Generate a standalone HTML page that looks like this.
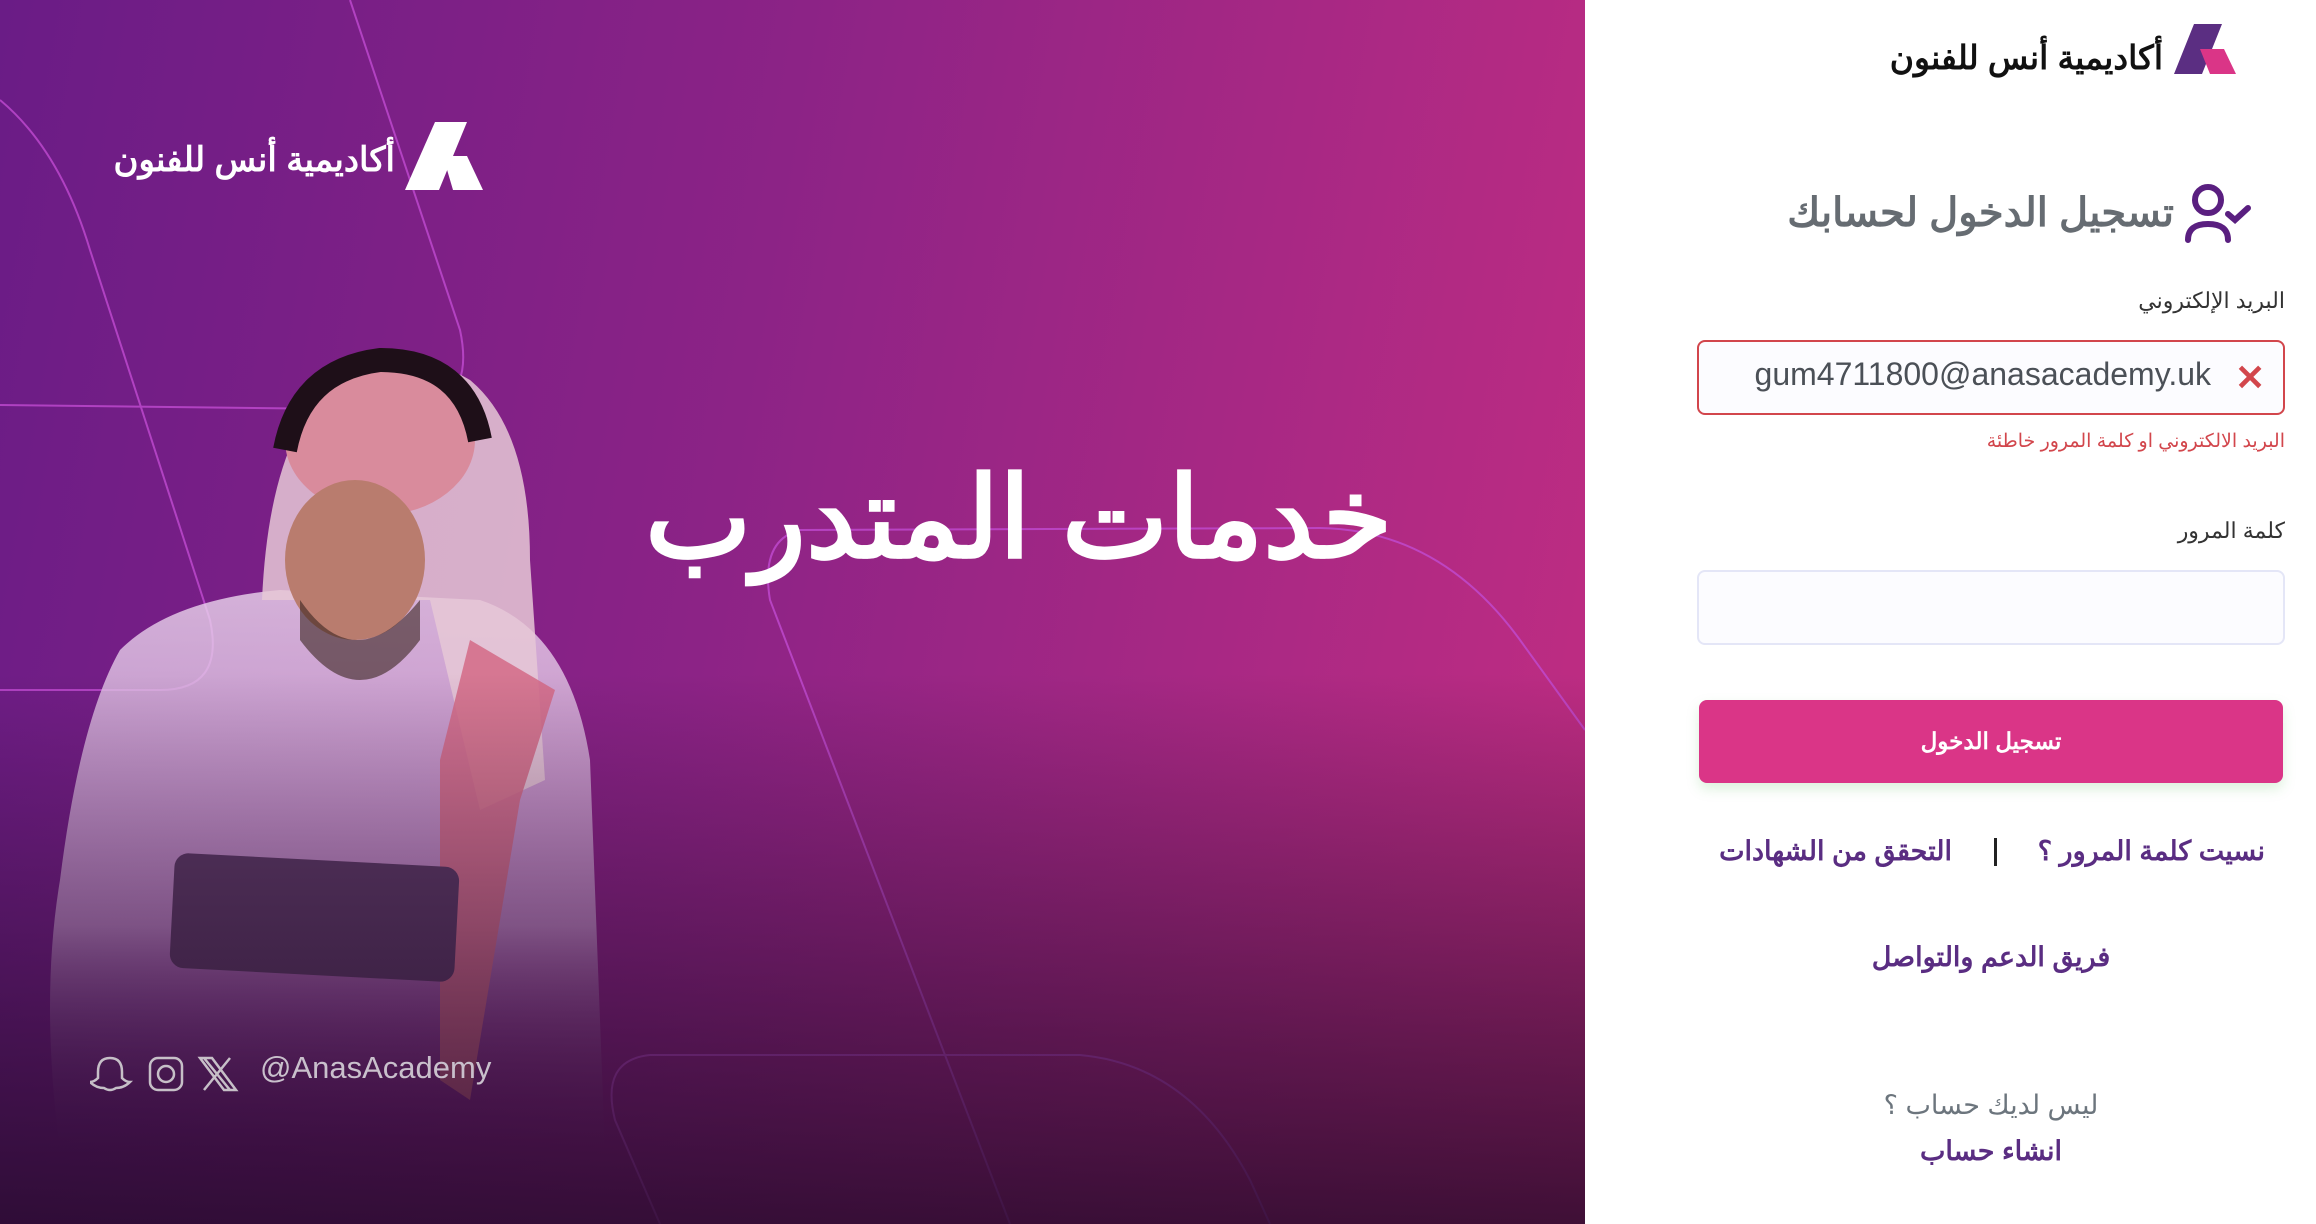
<!DOCTYPE html>
<html><head><meta charset="utf-8"><style>
*{margin:0;padding:0;box-sizing:border-box}
body{width:2316px;height:1224px;overflow:hidden;position:relative;background:#fff;font-family:"Liberation Sans","Noto Sans CJK SC",sans-serif}
.left{position:absolute;left:0;top:0;width:1585px;height:1224px;background:linear-gradient(100deg,#6a1c86 0%,#8c2386 45%,#c22d82 100%);overflow:hidden}
.shade{position:absolute;left:0;top:0;width:100%;height:100%;background:linear-gradient(180deg,rgba(0,0,0,0) 0%,rgba(0,0,0,0) 55%,rgba(30,8,35,.55) 85%,rgba(30,8,35,.8) 100%)}
.abs{position:absolute;white-space:nowrap}
.ar{direction:rtl}
</style></head><body>
<div class="left">
<svg class="abs" style="left:0px;top:0px" width="1585" height="1224" viewBox="0 0 1585 1224" fill="none" stroke="#c14bd2" stroke-width="2" opacity=".8">
<path d="M350 0 L460 330 Q475 400 420 410 L0 405"/>
<path d="M0 100 Q60 150 90 250 L210 620 Q225 690 160 690 L0 690"/>
<path d="M800 530 L1320 528 Q1440 530 1520 640 L1585 730"/>
<path d="M800 530 Q760 540 770 600 L1010 1224"/>
<path d="M650 1055 L1080 1055 Q1190 1065 1250 1180 L1270 1224"/>
<path d="M650 1055 Q600 1060 615 1120 L660 1224"/>
</svg>
<svg class="abs" style="left:0px;top:0px" width="700" height="1224" viewBox="0 0 700 1224">
<defs><linearGradient id="g" x1="0" y1="0" x2="0" y2="1"><stop offset="0" stop-color="#eedaf0"/><stop offset=".6" stop-color="#c99bd0"/><stop offset="1" stop-color="#7a3a8a" stop-opacity="0"/></linearGradient></defs>
<path d="M120 650 Q170 600 280 590 L480 600 Q570 630 590 760 L605 1150 L60 1150 Q40 1000 60 880 Q80 720 120 650Z" fill="url(#g)" opacity=".78"/>
<path d="M262 600 Q270 420 350 370 Q420 350 470 380 Q530 430 530 560 L545 780 L480 810 L430 600 L300 600Z" fill="#e6c8d6" opacity=".85"/>
<ellipse cx="380" cy="440" rx="95" ry="75" fill="#d98b9c"/>
<path d="M285 450 Q300 370 380 360 Q465 360 480 440" fill="none" stroke="#1e0f18" stroke-width="24"/>
<ellipse cx="355" cy="560" rx="70" ry="80" fill="#b97c6e"/>
<path d="M300 600 Q355 680 420 600 L420 640 Q360 720 300 640Z" fill="#3a2420" opacity=".6"/>
<path d="M470 640 L555 690 L520 800 L470 1100 L440 1080 L440 760Z" fill="#d46a86" opacity=".85"/>
<rect x="172" y="860" width="285" height="115" rx="14" fill="#5c3a66" transform="rotate(3 315 917)"/>
</svg>
<div class="shade"></div>
<svg class="abs" style="left:405px;top:120px" width="80" height="72" viewBox="0 0 80 72"><path d="M30 2 L62 2 L34 70 L0 70Z" fill="#fff"/><path d="M38 36 L62 36 L78 70 L48 70Z" fill="#fff"/></svg>
<div class="abs ar" style="right:1190px;top:140px;font-size:34px;font-weight:bold;color:#fff">أكاديمية أنس للفنون</div>
<div class="abs ar" style="left:645px;top:443px;font-size:113px;font-weight:bold;color:#fff;line-height:150px">خدمات المتدرب</div>
<svg class="abs" style="left:90px;top:1052px" width="150" height="42" viewBox="0 0 150 42" fill="none" stroke="#ddd" stroke-width="2.5" opacity=".85">
<path d="M20 6 Q32 6 32 20 L32 26 Q36 30 40 30 Q34 36 26 36 Q20 40 14 36 Q6 36 0 30 Q4 30 8 26 L8 20 Q8 6 20 6Z"/>
<rect x="60" y="6" width="32" height="32" rx="8"/><circle cx="76" cy="22" r="8"/>
<path d="M114 6 L140 38 M140 6 L114 38 M110 6 L122 6 L146 38 L134 38Z"/>
</svg>
<div class="abs" style="left:260px;top:1050px;font-size:31px;color:#c9c0cc">@AnasAcademy</div>
</div>

<svg class="abs" style="left:2172px;top:22px" width="66" height="54" viewBox="0 0 66 54"><path d="M22 2 L50 2 L30 52 L2 52Z" fill="#5b2e82"/><path d="M28 27 L52 27 L64 52 L38 52Z" fill="#da3587"/></svg>
<div class="abs ar" style="right:153px;top:38px;font-size:33px;font-weight:bold;color:#111">أكاديمية أنس للفنون</div>

<svg class="abs" style="left:2180px;top:170px" width="80" height="80" viewBox="0 0 80 80" fill="none" stroke="#5a1f80" stroke-width="6" stroke-linecap="round"><circle cx="28" cy="30" r="13"/><path d="M8 70 Q8 54 28 54 Q48 54 48 70"/><path d="M48 44 L55 50 L68 38"/></svg>
<div class="abs ar" style="right:142px;top:190px;font-size:40px;font-weight:bold;color:#666c72">تسجيل الدخول لحسابك</div>

<div class="abs ar" style="right:31px;top:288px;font-size:22px;color:#333">البريد الإلكتروني</div>
<div class="abs" style="left:1697px;top:340px;width:588px;height:75px;border:2px solid #d2464c;border-radius:8px;background:#fcfcff"></div>
<div class="abs" style="right:105px;top:356px;font-size:32px;color:#4b5057">gum4711800@anasacademy.uk</div>
<div class="abs" style="left:2235px;top:360px;font-size:36px;font-weight:bold;color:#d2464c;line-height:36px">✕</div>
<div class="abs ar" style="right:31px;top:430px;font-size:19px;color:#d2464c">البريد الالكتروني او كلمة المرور خاطئة</div>

<div class="abs ar" style="right:31px;top:518px;font-size:22px;color:#333">كلمة المرور</div>
<div class="abs" style="left:1697px;top:570px;width:588px;height:75px;border:2px solid #e4e6f7;border-radius:8px;background:#fcfcff"></div>

<div class="abs ar" style="left:1699px;top:700px;width:584px;height:83px;background:#da3587;border-radius:8px;box-shadow:0 6px 12px rgba(120,200,120,.25);color:#fff;font-size:23px;font-weight:bold;text-align:center;line-height:83px">تسجيل الدخول</div>

<div class="abs ar" style="right:51px;top:836px;font-size:27px;font-weight:bold;color:#5a2d82">نسيت كلمة المرور ؟</div>
<div class="abs" style="left:1994px;top:838px;width:3px;height:28px;background:#222"></div>
<div class="abs ar" style="right:364px;top:836px;font-size:27px;font-weight:bold;color:#5a2d82">التحقق من الشهادات</div>
<div class="abs ar" style="left:1691px;width:600px;text-align:center;top:942px;font-size:27px;font-weight:bold;color:#5a2d82">فريق الدعم والتواصل</div>
<div class="abs ar" style="left:1691px;width:600px;text-align:center;top:1090px;font-size:27px;color:#6c757d">ليس لديك حساب ؟</div>
<div class="abs ar" style="left:1691px;width:600px;text-align:center;top:1136px;font-size:27px;font-weight:bold;color:#5a2d82">انشاء حساب</div>
</body></html>
